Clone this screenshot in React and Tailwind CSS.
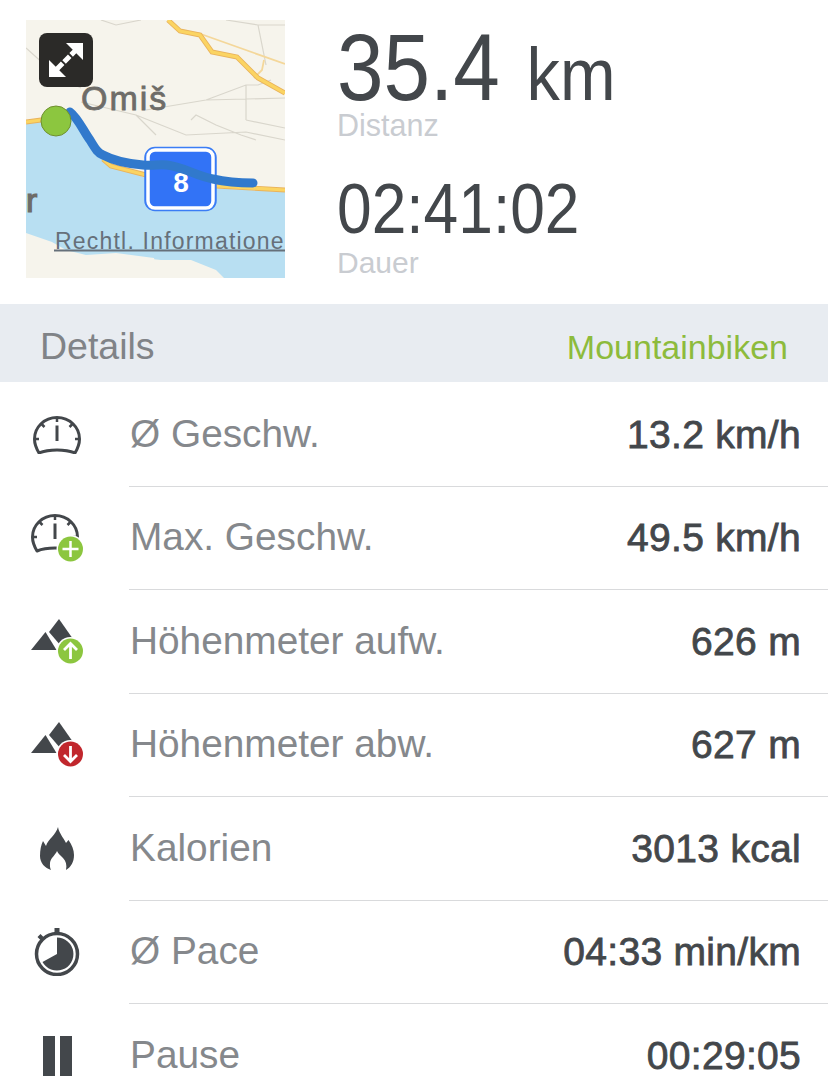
import React from "react";

const sans = "font-['Liberation_Sans',Arial,sans-serif]";
const ink = "#43474b";

const Gauge = () => (
  <>
    <path d="M6 37C3 32 1.500 27 1.500 23 1.500 11 11.500 1.500 24 1.500S46.500 11 46.500 23C46.500 27 45 32 42 37 36 34.500 30 34 24 34S12 34.500 6 37Z" fill="none" stroke={ink} strokeWidth="3" strokeLinejoin="round" />
    <path d="M24 9.500V25" stroke={ink} strokeWidth="3" />
    <path d="M24 2v4M8.500 8l3 3M39.500 8l-3 3M2 23h4M46 23h-4" stroke={ink} strokeWidth="2.500" />
  </>
);

const Mountains = () => (
  <>
    <path d="M0 31 14.500 13 25.500 31H0Z" fill={ink} />
    <path d="M18 13 28 0 42 20 30 27Z" fill={ink} />
  </>
);

const Badge = ({ color, cy = 32, children }) => (
  <>
    <circle cx="39.500" cy={cy} r="14" fill="#fff" />
    <circle cx="39.500" cy={cy} r="12.500" fill={color} />
    {children}
  </>
);

const icons = {
  speed: (
    <svg width="48" height="38" viewBox="0 0 48 38">
      <Gauge />
    </svg>
  ),
  maxSpeed: (
    <svg width="52" height="48" viewBox="0 0 52 48">
      <Gauge />
      <Badge color="#8cc63f" cy={35}>
        <path d="M39.500 27v16M31.500 35h16" stroke="#fff" strokeWidth="2.500" />
      </Badge>
    </svg>
  ),
  up: (
    <svg width="52" height="46" viewBox="0 0 52 46">
      <Mountains />
      <Badge color="#8cc63f">
        <path d="M39.500 40V25M33 31l6.500-6.500L46 31" fill="none" stroke="#fff" strokeWidth="2.800" />
      </Badge>
    </svg>
  ),
  down: (
    <svg width="52" height="46" viewBox="0 0 52 46">
      <Mountains />
      <Badge color="#c1272d">
        <path d="M39.500 24v15M33 33l6.500 6.500L46 33" fill="none" stroke="#fff" strokeWidth="2.800" />
      </Badge>
    </svg>
  ),
  flame: (
    <svg width="34" height="43" viewBox="0 0 34 43">
      <path d="M18 0C19 6 23 10 26 16L28.500 13C32 18 34 23 34 28 34 35 31 40 26 43 27 38 26 34 23 31 20 28 18.500 27 17 24 15.500 28 10.500 31 10 36 9.800 39 10 41 11 43 5 41 0 36 0 29 0 23 1 18 3 14L6 19C8 12 16 8 18 0Z" fill={ink} />
    </svg>
  ),
  timer: (
    <svg width="46" height="48" viewBox="0 0 46 48">
      <circle cx="23" cy="26" r="20.500" fill="none" stroke={ink} strokeWidth="3.500" />
      <path d="M23 9.500A16.500 16.500 0 1 1 8.500 34L23 26Z" fill={ink} />
      <path d="M20.500 0h5v6h-5zM3.500 9l3-3 3 3-3 3z" fill={ink} />
    </svg>
  ),
  pause: (
    <svg width="29" height="40" viewBox="0 0 29 40">
      <path d="M0 0h12v40H0zM17 0h12v40H17z" fill={ink} />
    </svg>
  ),
};

const rows = [
  { icon: "speed", label: "Ø Geschw.", value: "13.2 km/h" },
  { icon: "maxSpeed", label: "Max. Geschw.", value: "49.5 km/h" },
  { icon: "up", label: "Höhenmeter aufw.", value: "626 m" },
  { icon: "down", label: "Höhenmeter abw.", value: "627 m" },
  { icon: "flame", label: "Kalorien", value: "3013 kcal" },
  { icon: "timer", label: "Ø Pace", value: "04:33 min/km" },
  { icon: "pause", label: "Pause", value: "00:29:05" },
];

const MapThumb = () => (
  <div className="relative w-[259px] h-[258px] shrink-0 overflow-hidden bg-[#f6f4ec]">
    <svg width="259" height="258" viewBox="0 0 259 258" className="block">
      <path d="M0 104 L44 97 L60 115 L77 140 L117 157 L187 168 L259 172 L259 258 L0 258Z" fill="#b8dff2" />
      <path d="M0 213 L26 222 L40 230 L60 235 L90 233 L128 238 L132 258 L0 258Z" fill="#f6f4ec" />
      <path d="M108 237 L135 240 L165 240 L190 250 L198 258 L120 258Z" fill="#f6f4ec" />
      <path d="M75 0 L90 5 L115 0 M200 0 L232 5 L259 5 M232 5 L240 45 M0 28 L30 55 L55 68 M55 82 L110 95 L160 115 L220 112 L259 120 M180 80 L120 90 M180 80 L220 65 L232 65 L245 60 M220 65 L220 100 M220 100 L259 108 M180 80 L259 78 M130 115 L110 95 M165 100 L170 95 L190 105 L215 115 L230 120" fill="none" stroke="#d9d6cc" strokeWidth="1.200" />
      <path d="M172 13 L259 44 M238 40 L236 50 L228 58" fill="none" stroke="#f4d79a" strokeWidth="1.800" />
      <path d="M142 0 L154 11 L174 15 L186 32 L211 37 L232 58 L259 73" fill="none" stroke="#e9b35c" strokeWidth="5" />
      <path d="M142 0 L154 11 L174 15 L186 32 L211 37 L232 58 L259 73" fill="none" stroke="#fbd462" strokeWidth="3.200" />
      <path d="M0 102 L30 98M77 139 L85 146 L120 155 L190 166 L259 170" fill="none" stroke="#e9b35c" strokeWidth="5" />
      <path d="M0 102 L30 98M77 139 L85 146 L120 155 L190 166 L259 170" fill="none" stroke="#fbd462" strokeWidth="3.200" />
      <text x="55" y="90" fontFamily="Liberation Sans, sans-serif" fontSize="34" letterSpacing="2" fill="#6e6c68" stroke="#6e6c68" strokeWidth="0.800">Omiš</text>
      <text x="0" y="192" fontFamily="Liberation Sans, sans-serif" fontSize="34" letterSpacing="2" fill="#6e6c68" stroke="#6e6c68" strokeWidth="1.200">r</text>
      <rect x="119" y="127.500" width="71" height="63" rx="10" fill="#3273f6" stroke="#3b7df5" strokeWidth="1.500" />
      <rect x="122" y="130" width="65" height="58" rx="7" fill="#3273f6" stroke="#fff" strokeWidth="3.500" />
      <text x="155" y="172" textAnchor="middle" fontFamily="Liberation Sans, sans-serif" fontWeight="700" fontSize="28" fill="#fff">8</text>
      <path d="M44 92 C52 98 58 112 64 120 C70 130 72 133 77 135 C90 142 105 144 117 145 C128 146 132 144 141 145 C158 147 170 156 187 159 C200 162 212 163 227 163" fill="none" stroke="#3179cc" strokeWidth="9" strokeLinecap="round" />
      <text x="29" y="229" fontFamily="Liberation Sans, sans-serif" fontSize="23" letterSpacing="1.200" fill="#66707a">Rechtl. Informationen</text>
      <path d="M28 230.500H259" stroke="#66707a" strokeWidth="2" />
      <circle cx="30" cy="101" r="15" fill="#8cc63f" stroke="#6f8f2f" strokeWidth="1" />
    </svg>
    <div className="absolute left-[13px] top-[13px] w-[54px] h-[54px] rounded-lg bg-[#2b2a28] flex items-center justify-center">
      <svg width="38" height="38" viewBox="0 0 38 38">
        <path d="M10 28 28 10" stroke="#fff" strokeWidth="5" strokeDasharray="8 2" />
        <path d="M19 2h17v17zM19 36H2V19z" fill="#fff" />
      </svg>
    </div>
  </div>
);

export default function App() {
  return (
    <div className={`${sans} w-[828px] h-[1087px] overflow-hidden bg-white text-[#43474b]`}>
      <div className="h-[304px] flex pl-[26px] pt-5 gap-[52px]">
        <MapThumb />
        <div className="flex flex-col">
          <div className="h-[83px] mt-[6px] flex items-baseline whitespace-nowrap origin-left scale-x-[0.89]">
            <span className="inline-block text-[94px] leading-[83px]">35.4</span>
            <span className="inline-block text-[75px] leading-[60px] ml-[30px]">km</span>
          </div>
          <div className="text-[30.500px] leading-[32px] text-[#c9ccd1]">Distanz</div>
          <div className="text-[70px] leading-[70px] mt-[33px] origin-left scale-x-[0.89] whitespace-nowrap">02:41:02</div>
          <div className="text-[30px] leading-[32px] text-[#c9ccd1] mt-[3px]">Dauer</div>
        </div>
      </div>
      <div className="h-[78px] bg-[#e8ecf1] flex items-center justify-between pl-10 pr-10 pt-2">
        <span className="text-[37.500px] leading-none text-[#808387]">Details</span>
        <span className="text-[34px] leading-none text-[#8dbb3c]">Mountainbiken</span>
      </div>
      <div className="pt-px">
        {rows.map((row) => (
          <div key={row.label} className="flex h-[103.500px]">
            <div className="w-[114px] mr-[15px] shrink-0 flex items-center justify-center">
              {icons[row.icon]}
            </div>
            <div className="flex-1 flex items-center justify-between pl-px pr-[27px] border-b border-[#d9dadc]">
              <span className="text-[38.800px] leading-none text-[#85888c]">{row.label}</span>
              <span className="text-[39px] leading-none tracking-[0.3px] text-[#43474b] [-webkit-text-stroke:0.8px_#43474b]">{row.value}</span>
            </div>
          </div>
        ))}
      </div>
    </div>
  );
}
